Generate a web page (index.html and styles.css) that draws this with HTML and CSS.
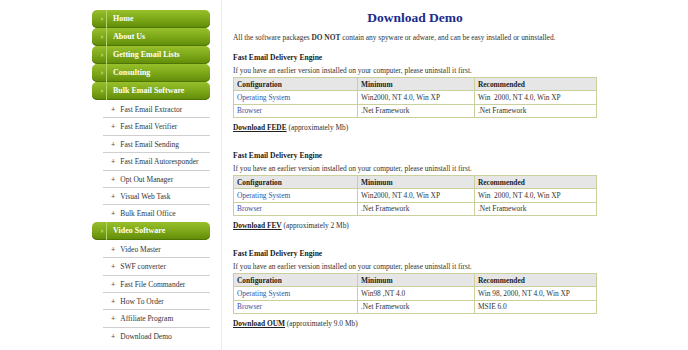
FILE: index.html
```html
<!DOCTYPE html>
<html lang="en">
<head>
    <meta charset="UTF-8">
    <title>Download Demo</title>
    <link rel="stylesheet" href="styles.css">
</head>
<body>
<div class="page">
    <div class="sidebar">
        <a class="nav-btn" href="#">Home</a>
        <a class="nav-btn" href="#">About Us</a>
        <a class="nav-btn" href="#">Getting Email Lists</a>
        <a class="nav-btn" href="#">Consulting</a>
        <a class="nav-btn" href="#">Bulk Email Software</a>
        <ul class="sub-menu">
            <li><a href="#">Fast Email Extractor</a></li>
            <li><a href="#">Fast Email Verifier</a></li>
            <li><a href="#">Fast Email Sending</a></li>
            <li><a href="#">Fast Email Autoresponder</a></li>
            <li><a href="#">Opt Out Manager</a></li>
            <li><a href="#">Visual Web Task</a></li>
            <li><a href="#">Bulk Email Office</a></li>
        </ul>
        <a class="nav-btn" href="#">Video Software</a>
        <ul class="sub-menu">
            <li><a href="#">Video Master</a></li>
            <li><a href="#">SWF converter</a></li>
            <li><a href="#">Fast File Commander</a></li>
            <li><a href="#">How To Order</a></li>
            <li><a href="#">Affiliate Program</a></li>
            <li><a href="#">Download Demo</a></li>
        </ul>
    </div>

    <div class="content">
        <h1>Download Demo</h1>
        <p class="intro">All the software packages <b>DO NOT</b> contain any spyware or adware, and can be easy installed or uninstalled.</p>

        <div class="product">
            <h2>Fast Email Delivery Engine</h2>
            <p>If you have an earlier version installed on your computer, please uninstall it first.</p>
            <table class="req">
                <tr><th>Configuration</th><th>Minimum</th><th>Recommended</th></tr>
                <tr><td><a href="#">Operating System</a></td><td>Win2000, NT 4.0, Win XP</td><td>Win&nbsp; 2000, NT 4.0, Win XP</td></tr>
                <tr><td><a href="#">Browser</a></td><td>.Net Framework</td><td>.Net Framework</td></tr>
            </table>
            <p class="dl"><a href="#">Download FEDE</a> (approximately Mb)</p>
        </div>

        <div class="product">
            <h2>Fast Email Delivery Engine</h2>
            <p>If you have an earlier version installed on your computer, please uninstall it first.</p>
            <table class="req">
                <tr><th>Configuration</th><th>Minimum</th><th>Recommended</th></tr>
                <tr><td><a href="#">Operating System</a></td><td>Win2000, NT 4.0, Win XP</td><td>Win&nbsp; 2000, NT 4.0, Win XP</td></tr>
                <tr><td><a href="#">Browser</a></td><td>.Net Framework</td><td>.Net Framework</td></tr>
            </table>
            <p class="dl"><a href="#">Download FEV</a> (approximately 2 Mb)</p>
        </div>

        <div class="product">
            <h2>Fast Email Delivery Engine</h2>
            <p>If you have an earlier version installed on your computer, please uninstall it first.</p>
            <table class="req">
                <tr><th>Configuration</th><th>Minimum</th><th>Recommended</th></tr>
                <tr><td><a href="#">Operating System</a></td><td>Win98 ,NT 4.0</td><td>Win 98, 2000, NT 4.0, Win XP</td></tr>
                <tr><td><a href="#">Browser</a></td><td>.Net Framework</td><td>MSIE 6.0</td></tr>
            </table>
            <p class="dl"><a href="#">Download OUM</a> (approximately 9.0 Mb)</p>
        </div>
    </div>
</div>
</body>
</html>
```

FILE: styles.css
```css
body {
    margin: 0;
    background: #fff;
    color: #333;
    font-family: "Liberation Serif", "Times New Roman", serif;
    font-size: 7.4px;
}
a {
    text-decoration: none;
}
.page {
    display: flex;
    padding-left: 92px;
    min-height: 350px;
}
.sidebar {
    width: 118px;
    padding-top: 10px;
    padding-right: 11px;
    border-right: 1px solid #ececec;
}
.nav-btn {
    display: block;
    position: relative;
    height: 18px;
    line-height: 17px;
    padding-left: 21px;
    color: #fff;
    font-size: 8px;
    font-weight: bold;
    border-radius: 5px;
    background: linear-gradient(#98c02c, #7aa516 55%, #5f8a09);
    box-shadow: inset 0 -1px 0 #4f7605;
}
.nav-btn::before {
    content: "";
    position: absolute;
    left: 14px;
    top: 0;
    bottom: 0;
    border-left: 1px solid #b8d46a;
}
.nav-btn::after {
    content: "";
    position: absolute;
    left: 9px;
    top: 7px;
    border: 2px solid transparent;
    border-left: 3px solid #a9c95a;
}
.sub-menu {
    list-style: none;
    margin: 0;
    padding: 1px 0 0 11px;
}
.sub-menu li {
    height: 16.4px;
    line-height: 17px;
    border-bottom: 1px solid #cfcfcf;
    padding-left: 8px;
}
.sub-menu li:last-child {
    border-bottom: none;
}
.sub-menu a {
    color: #333;
    font-size: 7.5px;
}
.sub-menu a::before {
    content: "+";
    font-weight: bold;
    margin-right: 5px;
    color: #555;
}
.content {
    width: 364px;
    padding: 10px 0 0 11px;
}
h1 {
    margin: 0 0 7px;
    text-align: center;
    font-size: 13.5px;
    color: #1d2b8c;
}
p {
    margin: 0;
}
.intro {
    margin-bottom: 11px;
}
.product {
    height: 98px;
}
h2 {
    margin: 0 0 4px;
    font-size: 7.6px;
    color: #222;
}
.req {
    width: 100%;
    margin-top: 2px;
    border-collapse: collapse;
    border: 1px solid #c9d09c;
}
.req th, .req td {
    border: 1px solid #c9d09c;
    text-align: left;
    height: 12.3px;
    padding: 0 3px;
}
.req th {
    background: #e6e6e6;
    color: #222;
}
.req th:first-child {
    width: 117px;
}
.req th:nth-child(2) {
    width: 110px;
}
.req td a {
    color: #3554a4;
}
.dl {
    margin-top: 5px;
}
.dl a {
    color: #222;
    font-weight: bold;
    text-decoration: underline;
}
```
